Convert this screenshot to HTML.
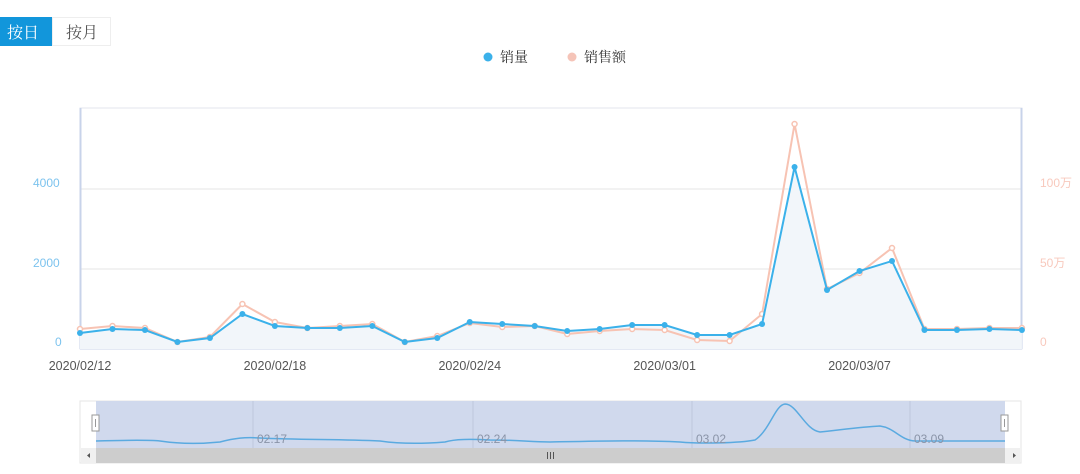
<!DOCTYPE html>
<html><head><meta charset="utf-8"><style>
html,body{margin:0;padding:0;background:#fff;width:1080px;height:474px;overflow:hidden;font-family:"Liberation Sans","Noto Sans CJK SC",sans-serif}
.tabs{position:absolute;left:0;top:17px;display:flex}
.tab{height:29px;line-height:29px;font-size:16px;font-family:"Noto Serif CJK SC","Liberation Serif",serif;box-sizing:border-box}
.t1{background:#1296db;color:#fff;width:52px;padding-left:7px}
.t2{border:1px solid #eee;color:#555;width:59px;line-height:27px;padding-left:13px}
svg{position:absolute;left:0;top:0}
</style></head><body>
<div class="tabs"><div class="tab t1">按日</div><div class="tab t2">按月</div></div>
<svg id="s" width="1080" height="474" xmlns="http://www.w3.org/2000/svg"></svg>
<script>
var B=[333,329,330,342,338,314,326,328,328,326,342,338,322,324,326,331,329,325,325,335,335,324,167,290,271,261,330,330,329,330];
var P=[329,326,328,342,337,304,322,328,326,324,342,336,323,327,326,334,331,329,330,340,341,314,124,289,273,248,329,329,328,328];
function X(i){return 80+i*32.48}
var h='';
h+='<circle cx="488" cy="57" r="4.5" fill="#3bb1ea"/><text x="500" y="62" font-size="14" fill="#333" font-family="Noto Serif CJK SC,serif">销量</text>';
h+='<circle cx="572" cy="57" r="4.5" fill="#f5c4b8"/><text x="584" y="62" font-size="14" fill="#333" font-family="Noto Serif CJK SC,serif">销售额</text>';
h+='<rect x="80" y="108" width="942" height="241" fill="none" stroke="#e3e6ee"/>';
h+='<line x1="80" y1="189" x2="1022" y2="189" stroke="#e6e6e6"/><line x1="80" y1="269" x2="1022" y2="269" stroke="#e6e6e6"/>';
h+='<line x1="80.5" y1="108" x2="80.5" y2="349" stroke="#c8d3ea" stroke-width="2"/><line x1="1021.5" y1="108" x2="1021.5" y2="349" stroke="#c8d3ea" stroke-width="2"/>';
h+='<line x1="80" y1="349" x2="1022" y2="349" stroke="#c8d3ea"/>';
var f='M80,349';B.forEach(function(y,i){f+=' L'+X(i)+','+y});f+=' L'+X(29)+',349Z';
h+='<path d="'+f+'" fill="#f2f6fa"/>';
var pp='',bp='';P.forEach(function(y,i){pp+=(i?' L':'M')+X(i)+','+y});B.forEach(function(y,i){bp+=(i?' L':'M')+X(i)+','+y});
h+='<path d="'+pp+'" fill="none" stroke="#f7c3b3" stroke-width="2"/>';
P.forEach(function(y,i){h+='<circle cx="'+X(i)+'" cy="'+y+'" r="2.5" fill="#fff" stroke="#f7c3b3" stroke-width="1.5"/>'});
h+='<path d="'+bp+'" fill="none" stroke="#3bb1ea" stroke-width="2"/>';
B.forEach(function(y,i){h+='<circle cx="'+X(i)+'" cy="'+y+'" r="3" fill="#3bb1ea"/>'});
h+='<g font-size="12" fill="#7cc3ee"><text x="33" y="187">4000</text><text x="33" y="267">2000</text><text x="55" y="346">0</text></g>';
h+='<g font-size="12" fill="#f8c9bd"><text x="1040" y="187">100万</text><text x="1040" y="267">50万</text><text x="1040" y="346">0</text></g>';
['2020/02/12','2020/02/18','2020/02/24','2020/03/01','2020/03/07'].forEach(function(t,k){h+='<text x="'+(X(k*6))+'" y="370" font-size="12.5" fill="#555" text-anchor="middle">'+t+'</text>'});
h+='<rect x="80" y="401" width="941" height="62" fill="#fff" stroke="#e5e5e5"/>';
h+='<rect x="96" y="401" width="909" height="47" fill="#d0d9ed"/>';
[253,473,692,910].forEach(function(x){h+='<line x1="'+x+'" y1="401" x2="'+x+'" y2="448" stroke="#b9c3d8" stroke-width="0.8"/>'});
h+='<path d="M96,441 C130,440 150,440 160,441 C180,444 200,444 220,442 C235,438 245,437 260,438 C300,440 340,439 380,441 C400,444 420,444 445,442 C455,439 470,439 490,440 C520,440 530,442 550,442 C600,441 640,440 680,442 C700,444 740,443 755,440 C770,430 775,405 785,404 C797,404 805,430 820,432 C840,430 860,427 880,426 C895,428 900,440 915,441 L1005,441" fill="none" stroke="#5aaae0" stroke-width="1.5"/>';
h+='<g font-size="12" fill="#8a94a8"><text x="257" y="443">02.17</text><text x="477" y="443">02.24</text><text x="696" y="443">03.02</text><text x="914" y="443">03.09</text></g>';
h+='<rect x="92" y="415" width="7" height="16" fill="#fff" stroke="#999"/><line x1="95.5" y1="419" x2="95.5" y2="427" stroke="#999"/>';
h+='<rect x="1001" y="415" width="7" height="16" fill="#fff" stroke="#999"/><line x1="1004.5" y1="419" x2="1004.5" y2="427" stroke="#999"/>';
h+='<rect x="81" y="448" width="939" height="15" fill="#f0f0f0"/><rect x="96" y="448" width="909" height="15" fill="#cdcdcd"/>';
h+='<path d="M87,455.5 L90,453 L90,458Z" fill="#555"/><path d="M1016,455.5 L1013,453 L1013,458Z" fill="#555"/>';
h+='<g stroke="#555"><line x1="547.5" y1="452" x2="547.5" y2="459"/><line x1="550.5" y1="452" x2="550.5" y2="459"/><line x1="553.5" y1="452" x2="553.5" y2="459"/></g>';
document.getElementById('s').innerHTML=h;
</script>
</body></html>
